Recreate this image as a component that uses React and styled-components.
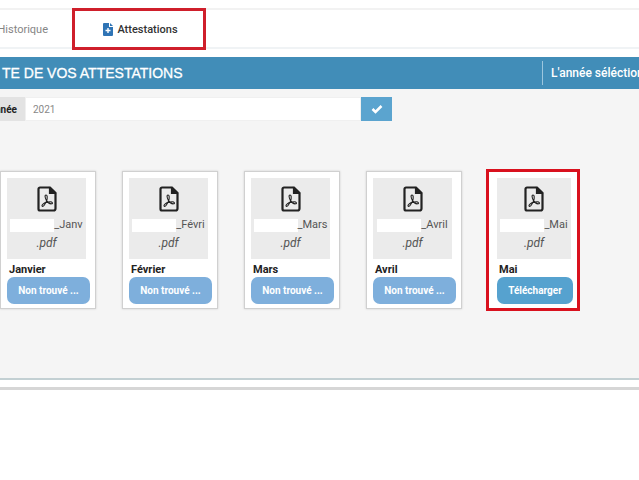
import React from "react";
import styled, { createGlobalStyle, css } from "styled-components";

const GlobalStyle = createGlobalStyle`
  * {
    box-sizing: border-box;
  }
  body {
    margin: 0;
    background: #fff;
    color: #222;
    font-family: Roboto, "Liberation Sans", sans-serif;
    font-size: 11px;
    overflow-x: hidden;
  }
`;

const Page = styled.main`
  padding-top: 8px;
  border-bottom: 3px solid #d6d6d6;
`;

const Tabs = styled.nav`
  display: flex;
  height: 42px;
  background: linear-gradient(#f2f2f2, #f2f2f2) 0 0 / 100% 2px no-repeat,
    linear-gradient(#f0f3f5, #f0f3f5) 0 39px / 100% 2px no-repeat;
`;

const Tab = styled.a`
  display: flex;
  align-items: center;
  justify-content: center;
  gap: 4px;
  color: #858585;
  text-decoration: none;
  white-space: nowrap;
  ${(props) =>
    props.$active
      ? css`
          width: 134px;
          padding-left: 3px;
          border: 3px solid #cf1f2b;
          color: #333;
          font-weight: 500;
        `
      : css`
          width: 72px;
          padding-right: 24px;
          justify-content: flex-end;
          overflow: hidden;
        `}
`;

const Panel = styled.section`
  margin-top: 7px;
  margin-bottom: 7px;
  background: #f5f5f5;
  border-bottom: 2px solid #c3d0d3;
`;

const PanelHeader = styled.header`
  display: flex;
  align-items: center;
  justify-content: space-between;
  height: 32px;
  background: #418db8;
  color: #fff;
`;

const Title = styled.h1`
  margin: 0;
  padding-left: 2px;
  font-family: "Liberation Sans", sans-serif;
  font-size: 14px;
  font-weight: 500;
  -webkit-text-stroke: 0.3px #fff;
  white-space: nowrap;
`;

const Selected = styled.div`
  width: 97px;
  padding-left: 8px;
  border-left: 1px solid #9cc6de;
  overflow: hidden;
  font-size: 12px;
  font-weight: 500;
  line-height: 24px;
  white-space: nowrap;
`;

const YearForm = styled.form`
  display: flex;
  width: 392px;
  height: 24px;
  margin-top: 8px;
`;

const YearLabel = styled.label`
  display: flex;
  align-items: center;
  justify-content: flex-end;
  width: 25px;
  padding-right: 8px;
  background: #e3e3e3;
  overflow: hidden;
  font-size: 10px;
  font-weight: 700;
`;

const YearInput = styled.input`
  flex: 1;
  min-width: 0;
  padding: 0 7px;
  border: 1px solid #f0f0f0;
  background: #fff;
  color: #888;
  font-family: inherit;
  font-size: 10px;
`;

const YearButton = styled.button`
  display: flex;
  align-items: center;
  justify-content: center;
  width: 31px;
  padding: 0;
  border: 0;
  background: #5ba4cf;
  color: #fff;
`;

const Cards = styled.div`
  display: flex;
  gap: 26px;
  padding: 50px 0 69px;
`;

const Card = styled.article`
  flex: none;
  width: ${(props) => (props.$highlight ? 90 : 96)}px;
  height: 138px;
  padding: 6px;
  padding-left: ${(props) => (props.$highlight ? 8 : 6)}px;
  background: #fff;
  border: 1px solid #d0d0d0;
  box-shadow: 0 0 2px #ccc;
  ${(props) =>
    props.$highlight &&
    css`
      border-color: #fff;
      outline: 3px solid #d9111e;
      outline-offset: -1px;
    `}
`;

const Preview = styled.div`
  display: flex;
  flex-direction: column;
  align-items: center;
  width: ${(props) => (props.$highlight ? 74 : 79)}px;
  height: 81px;
  padding-top: 8px;
  background: #ebebeb;
  color: #555;
  font-size: 11px;
`;

const FileName = styled.div`
  display: flex;
  align-items: center;
  height: 18px;
  margin-top: 4px;
  line-height: 18px;
`;

const Blank = styled.span`
  width: 44px;
  height: 13px;
  background: #fff;
`;

const Extension = styled.div`
  line-height: 18px;
  font-size: 12px;
  font-style: italic;
`;

const Month = styled.h2`
  margin: 4px 2px 0;
  font-size: 11px;
  font-weight: 700;
  line-height: 14px;
`;

const CardButton = styled.button`
  display: block;
  width: ${(props) => (props.$highlight ? 76 : 83)}px;
  height: 27px;
  padding: 0;
  border: 0;
  border-radius: 7px;
  background: ${(props) => (props.$highlight ? "#56a2cf" : "#7eafdc")};
  color: #fff;
  font-family: inherit;
  font-size: 10px;
  font-weight: 700;
`;

const months = [
  { name: "Janvier", file: "_Janv" },
  { name: "Février", file: "_Févri" },
  { name: "Mars", file: "_Mars" },
  { name: "Avril", file: "_Avril" },
  { name: "Mai", file: "_Mai", ready: true },
];

function FileIcon() {
  return (
    <svg width="10" height="13" viewBox="0 0 10 13" aria-hidden="true">
      <path d="M1 0h5v4h4v8a1 1 0 0 1-1 1H1a1 1 0 0 1-1-1V1a1 1 0 0 1 1-1z" fill="#2f74b5" />
      <path d="M7 0l3 3H7z" fill="#2f74b5" />
      <path d="M5 5v5M2.5 7.5h5" stroke="#fff" strokeWidth="1.4" />
    </svg>
  );
}

function PdfIcon() {
  return (
    <svg width="20" height="26" viewBox="0 0 20 26" fill="none" stroke="#222" aria-hidden="true">
      <path d="M3 1.5h10l5.5 5.5v15.5a2 2 0 0 1-2 2H3a1.5 1.5 0 0 1-1.5-1.5V3A1.5 1.5 0 0 1 3 1.5z" strokeWidth="2.2" />
      <path d="M12.5 2v5.5H18z" fill="#222" strokeWidth="1.2" />
      <path
        d="M9 9c-1.5 0-1 3 .4 5.4S13 18 14.6 17.8s.8-2-1.2-2c-3 0-7 1.4-8.2 3.2-.8 1.6.8 2 2 .2C8.800 17 10.4 13 10.2 10.6 10.1 9.6 9.8 9 9 9z"
        strokeWidth="1.1"
      />
    </svg>
  );
}

function MonthCard({ name, file, ready }) {
  return (
    <Card $highlight={ready}>
      <Preview $highlight={ready}>
        <PdfIcon />
        <FileName>
          <Blank />
          {file}
        </FileName>
        <Extension>.pdf</Extension>
      </Preview>
      <Month>{name}</Month>
      <CardButton type="button" $highlight={ready}>
        {ready ? "Télécharger" : "Non trouvé ..."}
      </CardButton>
    </Card>
  );
}

function App() {
  return (
    <>
      <GlobalStyle />
      <Page>
        <Tabs>
          <Tab href="#historique">Historique</Tab>
          <Tab href="#attestations" $active>
            <FileIcon />
            Attestations
          </Tab>
        </Tabs>
        <Panel>
          <PanelHeader>
            <Title>TE DE VOS ATTESTATIONS</Title>
            <Selected>L'année séléctionnée</Selected>
          </PanelHeader>
          <YearForm onSubmit={(e) => e.preventDefault()}>
            <YearLabel htmlFor="year">Année</YearLabel>
            <YearInput id="year" defaultValue="2021" />
            <YearButton type="submit" aria-label="Valider">
              <svg width="12" height="10" viewBox="0 0 12 10" fill="none" aria-hidden="true">
                <path d="M1.5 5l3 3L10.5 2" stroke="#fff" strokeWidth="2.5" />
              </svg>
            </YearButton>
          </YearForm>
          <Cards>
            {months.map((month) => (
              <MonthCard key={month.name} {...month} />
            ))}
          </Cards>
        </Panel>
      </Page>
    </>
  );
}

export default App;
